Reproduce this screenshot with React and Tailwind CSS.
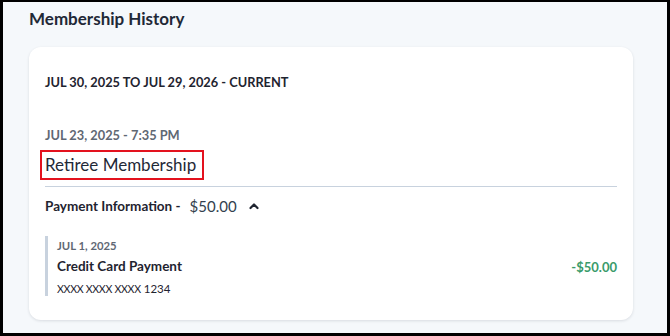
export default function App() {
  return (
    <div className="w-[670px] h-[336px] border-l-[3px] border-t-2 border-r-[3px] border-b-[3px] border-black bg-[#f5f8fb] pl-[26px] pr-[34px] font-['Lato',sans-serif] text-[#1e2733] overflow-hidden">
      <h1 className="h-[45px] pt-[7px] text-[17px] font-bold leading-[20px] text-[#1f2937]">Membership History</h1>
      <div className="h-[273px] rounded-[12px] bg-white shadow-[0_1px_3px_rgba(15,23,42,0.12)] px-4 pt-[27px]">
        <div className="text-[12.8px] font-bold leading-[16px] text-[#1f2430]">JUL 30, 2025 TO JUL 29, 2026 - CURRENT</div>
        <div className="mt-[37px] text-[12.8px] font-bold leading-[16px] text-[#5f6874]">JUL 23, 2025 - 7:35 PM</div>
        <div className="mt-[7px] -ml-[5px] w-fit border-2 border-[#e3121e] pl-[3px] pr-[6px] h-[30px] text-[17px] leading-[26px] text-[#1f2937]">Retiree Membership</div>
        <div className="mt-[6px] h-px bg-[#c8d2de]" />
        <div className="flex items-center h-[38px]">
          <span className="text-[13.5px] font-bold text-[#1f2430]">Payment Information -</span>
          <span className="ml-[9px] text-[15px] text-[#333f4e]">$50.00</span>
          <svg className="ml-[11px]" width="12" height="12" viewBox="0 0 12 12" fill="none" stroke="#1f2430" strokeWidth="2.2" strokeLinecap="round" strokeLinejoin="round">
            <path d="M2.5 8l3.5-3.5L9.5 8" />
          </svg>
        </div>
        <div className="mt-[11px] flex border-l-[3px] border-[#c8d2de] pl-[9px] pr-0 h-[60px]">
          <div className="flex-1">
            <div className="text-[11.3px] font-bold leading-[16px] text-[#5f6874] mt-[2px]">JUL 1, 2025</div>
            <div className="text-[13.5px] font-bold leading-[18px] mt-[3px] text-[#1f2430]">Credit Card Payment</div>
            <div className="leading-[16px] mt-[4px] text-[#1f2430]">
              <span className="text-[10.6px] tracking-[-0.3px]">XXXX XXXX XXXX</span>
              <span className="text-[11.5px] ml-[3px]">1234</span>
            </div>
          </div>
          <div className="text-[13px] font-bold text-[#3a9b6b] mt-[22px] leading-[18px]">-$50.00</div>
        </div>
      </div>
    </div>
  );
}
